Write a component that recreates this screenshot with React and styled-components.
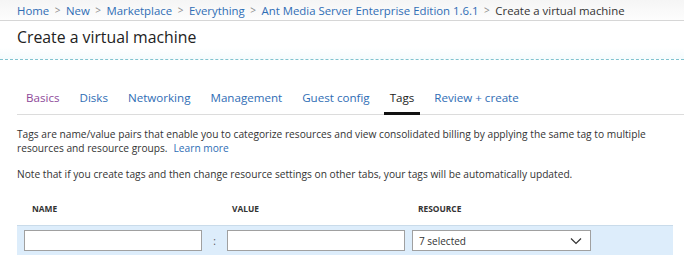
import React from 'react'
import styled, { createGlobalStyle } from 'styled-components'

const Global = createGlobalStyle`
    html, body { margin: 0; padding: 0; background: #fff; }
    body {
        font-family: "Open Sans", "Noto Sans", "Liberation Sans", sans-serif;
        color: #333;
        width: 684px;
        height: 266px;
        overflow: hidden;
    }
`;

// Header
const Crumbs = styled.nav`
    display: flex;
    align-items: center;
    height: 20px;
    padding-left: 17px;
    font-size: 11.4px;
    background: linear-gradient(to bottom, #f5f5f5, #fdfdfd);
    border-bottom: 1px solid #d6d6d6;
    white-space: nowrap;
`;
const Crumb = styled.span`
    color: ${p => p.current ? '#333' : '#2f6db5'};
`;
const Sep = styled.span`
    color: #8a8a8a;
    font-size: 10px;
    margin: 0 5.5px;
`;
const TitleBar = styled.div`
    height: 38px;
    padding-left: 17px;
    display: flex;
    align-items: center;
    background: linear-gradient(to bottom, #ffffff 70%, #f4fbfd);
    border-bottom: 1px dashed #7fc3cf;
`;
const Title = styled.h1`
    margin: 0;
    margin-top: -7px;
    font-size: 15.8px;
    font-weight: 400;
    color: #222;
`;

// Tabs
const Tabs = styled.div`
    display: flex;
    margin: 25px 0 0 17px;
    border-bottom: 1px solid #dcdcdc;
    height: 29px;
    padding-left: 8px;
    gap: 18px;
`;
const Tab = styled.div`
    position: relative;
    font-size: 11.6px;
    line-height: 26px;
    color: ${p => p.active ? '#222' : p.visited ? '#8e4a9a' : '#2f6db5'};
    padding: 0 1px;
    ${p => p.active && `
        &:after {
            content: '';
            position: absolute;
            left: -5px; right: -5px; bottom: -1px;
            height: 3px;
            background: #111;
        }
    `}
`;

// Body
const Body = styled.div`
    padding: 12px 17px 0;
    font-size: 10.2px;
    line-height: 14px;
    color: #333;
`;
const Para = styled.p`
    margin: 0 0 12px;
    max-width: 650px;
`;
const Link = styled.a`
    color: #2f6db5;
    text-decoration: none;
    margin-left: 6px;
`;

// Tags grid
const HeadRow = styled.div`
    display: grid;
    grid-template-columns: 200px 186px 180px;
    padding: 10px 0 0 32px;
    height: 18px;
    font-size: 8.4px;
    font-weight: 700;
    color: #333;
`;
const TagWrap = styled.div`
    padding: 0 11px 0 17px;
`;
const TagRow = styled.div`
    display: flex;
    align-items: center;
    height: 29px;
    margin-top: 4px;
    padding-left: 7px;
    background: #ddedfb;
    border-top: 1px solid #c9dbea;
`;
const Field = styled.div`
    box-sizing: border-box;
    width: ${p => p.w}px;
    height: 21px;
    margin-right: ${p => p.mr || 0}px;
    background: #fff;
    border: 1px solid #a0a0a0;
    display: flex;
    align-items: center;
    justify-content: space-between;
    padding: 0 8px 0 6px;
    font-size: 10px;
    color: #333;
`;
const Colon = styled.span`
    width: 25px;
    text-align: center;
    font-size: 10px;
    color: #555;
`;

export default function App() {
    const crumbs = ['Home', 'New', 'Marketplace', 'Everything', 'Ant Media Server Enterprise Edition 1.6.1']
    const tabs = ['Basics', 'Disks', 'Networking', 'Management', 'Guest config', 'Tags', 'Review + create']
    return (
        <>
            <Global />
            <Crumbs>
                {crumbs.map(c => (
                    <React.Fragment key={c}>
                        <Crumb>{c}</Crumb>
                        <Sep>&gt;</Sep>
                    </React.Fragment>
                ))}
                <Crumb current>Create a virtual machine</Crumb>
            </Crumbs>
            <TitleBar>
                <Title>Create a virtual machine</Title>
            </TitleBar>
            <Tabs>
                {tabs.map(t => (
                    <Tab key={t} active={t === 'Tags'} visited={t === 'Basics'}>{t}</Tab>
                ))}
            </Tabs>
            <Body>
                <Para>
                    <span>Tags are name/value pairs that enable you to categorize resources and view consolidated billing by applying the same tag to multiple</span>
                    <br />
                    <span>resources and resource groups.</span>
                    <Link href="#">Learn more</Link>
                </Para>
                <Para>Note that if you create tags and then change resource settings on other tabs, your tags will be automatically updated.</Para>
            </Body>
            <HeadRow>
                <span>NAME</span>
                <span>VALUE</span>
                <span>RESOURCE</span>
            </HeadRow>
            <TagWrap>
                <TagRow>
                    <Field w={178} />
                    <Colon>:</Colon>
                    <Field w={178} mr={7} />
                    <Field w={179}>
                        <span>7 selected</span>
                        <svg width="12" height="8" viewBox="0 0 12 8">
                            <path d="M1 1.5 L6 6.5 L11 1.5" fill="none" stroke="#333" strokeWidth="1.2" />
                        </svg>
                    </Field>
                </TagRow>
            </TagWrap>
        </>
    )
}
